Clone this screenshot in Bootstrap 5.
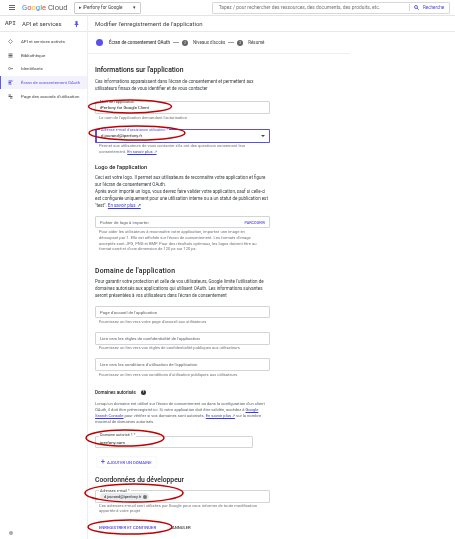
<!DOCTYPE html>
<html lang="fr">
<head>
  <meta charset="UTF-8" />
  <meta name="viewport" content="width=device-width, initial-scale=1.0" />
  <title>Google Cloud - API et services</title>
  <link href="https://cdn.jsdelivr.net/npm/bootstrap@5.3.0/dist/css/bootstrap.min.css" rel="stylesheet" />
  <style>
    html, body { height: 539px; overflow: hidden; }
    body { font-family: Roboto, "Liberation Sans", sans-serif; font-size: 4.3px; line-height: 7px; color: #3c4043; position: relative; background: #fff; }
    a { color: #3b3be0; }
    .top-bar, .side-col, .main-col { will-change: transform; }
    .top-bar { height: 16px; border-bottom: 1px solid #e4e4e4; padding: 1px 5px 1px 9px; }
    .burger { width: 6px; height: 5px; border-top: 1px solid #666; border-bottom: 1px solid #666; position: relative; margin-right: 7px; }
    .burger::after { content: ""; position: absolute; left: 0; right: 0; top: 1px; height: 1px; background: #666; }
    .g-logo { font-size: 7.6px; line-height: 12px; width: 52px; color: #5f6368; }
    .g-blue { color: #4285f4; }
    .g-red { color: #ea4335; }
    .g-yellow { color: #fbbc05; }
    .g-green { color: #34a853; }
    .project-btn { width: 67px; height: 12px; border: 1px solid #ccc; border-radius: 1px; font-size: 4.6px; padding: 0 4px; color: #3c4043; }
    .search-box { width: 239px; height: 12px; margin-left: 71px; border: 1px solid #d8d8d8; border-radius: 1px; color: #70757a; }
    .search-text { padding-left: 6px; font-size: 4.9px; white-space: nowrap; }
    .search-go { width: 40px; border-left: 1px solid #d8d8d8; color: #4a3fe0; font-size: 4.5px; padding-left: 4px; }
    .side-col { width: 88px; height: 523px; border-right: 1px solid #eee; }
    .side-head { height: 16px; padding-left: 5px; border-bottom: 1px solid #e8e8e8; font-size: 6px; color: #444; }
    .api-mark { width: 17px; font-family: "Liberation Mono", monospace; font-size: 6px; font-weight: 700; color: #666; }
    .side-list { padding-top: 3px; }
    .side-item { height: 13.6px; padding-left: 8px; font-size: 4.4px; color: #444; white-space: nowrap; }
    .side-item svg { margin-right: 8px; }
    .side-on { background: #f2f2fd; border-left: 1px solid #5b5bf0; padding-left: 7px; color: #5a50e0; }
    .collapse-mark { position: absolute; left: 9px; bottom: 4px; width: 4px; height: 4px; border-radius: 50%; background: #aaa; }
    .main-col { width: 367px; }
    .page-title { height: 16px; padding-left: 7px; border-bottom: 1px solid #e8e8e8; font-size: 6px; color: #444; }
    .step-row { width: 262px; height: 22px; padding-left: 8px; border-bottom: 1px solid #eee; color: #444; font-size: 4.5px; white-space: nowrap; }
    .step-dot { width: 7px; height: 7px; border-radius: 50%; background: #5b50e8; margin-right: 6px; }
    .step-num { width: 6px; height: 6px; border-radius: 50%; background: #5f6368; margin-right: 5px; color: #fff; font-size: 3px; line-height: 6px; text-align: center; }
    .step-line { width: 6px; height: 1px; background: #9aa0a6; margin: 0 3px; }
    .form-area { width: 175px; margin-left: 7px; }
    .sec-title { font-size: 6.8px; font-weight: 500; line-height: 8px; color: #202124; white-space: nowrap; }
    .title-wide { letter-spacing: .25px; }
    .sub-title { font-size: 5.7px; font-weight: 500; line-height: 8px; color: #202124; white-space: nowrap; }
    .tiny-title { font-size: 4.6px; font-weight: 500; line-height: 7px; color: #202124; }
    .txt { line-height: 7px; font-size: 4.5px; color: #3c4043; margin: 0; white-space: nowrap; }
    .txt-sm { line-height: 5.7px; font-size: 4.1px; color: #70757a; margin: 0; padding-left: 4px; white-space: nowrap; }
    .txt-dark { padding-left: 0; color: #5f6368; }
    .fld { height: 12.5px; border: 1px solid #d4d4d4; border-radius: 1px; padding-left: 4px; position: relative; color: #5f6368; }
    .fld-on { border: 1px solid #5b50e8; height: 14px; border-left-width: 2px; }
    .fld-val { color: #202124; line-height: 6px; padding-top: 3px; }
    .fld-lbl { position: absolute; left: 3px; top: -3px; background: #fff; padding: 0 1px; font-size: 3.8px; line-height: 5px; color: #3c4043; white-space: nowrap; }
    .fld-lbl-on { color: #5b50e8; }
    .lbl-high { top: -5px; }
    .caret-down { position: absolute; right: 4px; top: 5px; border-left: 2px solid transparent; border-right: 2px solid transparent; border-top: 2px solid #444; }
    .pick-btn { color: #5b50e8; font-size: 3.8px; font-weight: 500; margin-right: 4px; }
    .domain-fld { width: 158px; height: 11.5px; }
    .add-btn { width: 59px; height: 10px; margin-left: 2px; color: #5b50e8; font-size: 4.2px; font-weight: 500; box-shadow: 0 0 1px #bbb; border-radius: 1px; padding-left: 4px; white-space: nowrap; }
    .add-plus { font-size: 7px; margin-right: 2px; }
    .mail-fld { height: 13px; }
    .mail-chip { display: inline-flex; align-items: center; background: #e8eaed; border-radius: 4px; height: 7px; padding: 0 2px 0 4px; margin-top: 2.5px; color: #202124; font-size: 3.9px; white-space: nowrap; }
    .chip-x { width: 4px; height: 4px; border-radius: 50%; background: #777; margin-left: 2px; }
    .help-dot { width: 5px; height: 5px; border-radius: 50%; background: #333; color: #fff; font-size: 3.6px; line-height: 5px; text-align: center; margin-left: 5px; }
    .save-btn { color: #4a3fe0; font-size: 4.2px; font-weight: 500; padding-left: 4px; width: 77px; white-space: nowrap; }
    .cancel-btn { color: #3c4043; font-size: 4.2px; font-weight: 500; }
    .red-marks { position: absolute; left: 0; top: 0; pointer-events: none; }
    /* vertical rhythm taken from the reference */
    .sp-1 { margin-top: .8px; }
    .sp-2 { margin-top: 1.5px; }
    .sp-3 { margin-top: 2.5px; }
    .sp-4 { margin-top: 3.5px; }
    .sp-5 { margin-top: 5.5px; }
    .sp-6 { margin-top: 6px; }
    .sp-7 { margin-top: 7.3px; }
    .sp-8 { margin-top: 8.5px; }
    .sp-9 { margin-top: 9.5px; }
    .sp-11 { margin-top: 11.5px; }
    .sp-12 { margin-top: 12px; }
    .sp-15 { margin-top: 15px; }
  </style>
</head>
<body>
  <div class="top-bar d-flex align-items-center">
    <div class="burger"></div>
    <div class="g-logo"><span class="g-blue">G</span><span class="g-red">o</span><span class="g-yellow">o</span><span class="g-blue">g</span><span class="g-green">l</span><span class="g-red">e</span> Cloud</div>
    <div class="project-btn d-flex align-items-center justify-content-between">
      <span>&#9656; iPerfony for Google</span>
      <span>&#9662;</span>
    </div>
    <div class="search-box d-flex align-items-center">
      <div class="search-text flex-grow-1">Tapez / pour rechercher des ressources, des documents, des produits, etc.</div>
      <div class="search-go d-flex align-items-center gap-1 flex-shrink-0">
        <svg width="5" height="5" viewBox="0 0 10 10" fill="none" stroke="#4a3fe0" stroke-width="1.6"><circle cx="4" cy="4" r="3"/><path d="M6.2 6.2 9.5 9.5"/></svg>
        Recherche
      </div>
    </div>
  </div>

  <div class="d-flex">
    <div class="side-col flex-shrink-0">
      <div class="side-head d-flex align-items-center">
        <span class="api-mark">API</span>
        <span class="flex-grow-1">API et services</span>
        <svg class="me-2" width="5" height="6" viewBox="0 0 10 12" fill="#5b50e8"><path d="M3 0h4v5l2 2v1H6v4H4V8H1V7l2-2z"/></svg>
      </div>
      <div class="side-list">
        <div class="side-item d-flex align-items-center">
          <svg width="5" height="5" viewBox="0 0 10 10" fill="none" stroke="#666" stroke-width="1.3"><path d="M5 1 9 5 5 9 1 5z"/></svg>API et services activés
        </div>
        <div class="side-item d-flex align-items-center">
          <svg width="5" height="5" viewBox="0 0 10 10" fill="#666"><path d="M1 1h8v2H1zM1 4h8v2H1zM1 7h8v2H1z"/></svg>Bibliothèque
        </div>
        <div class="side-item d-flex align-items-center">
          <svg width="5" height="5" viewBox="0 0 10 10" fill="none" stroke="#666" stroke-width="1.3"><circle cx="3" cy="5" r="2"/><path d="M5 5h5M8 5v2"/></svg>Identifiants
        </div>
        <div class="side-item side-on d-flex align-items-center">
          <svg width="5" height="5" viewBox="0 0 10 10" fill="#5a50e0"><path d="M1 1h8v2H1zM1 4h5v2H1zM1 7h6v2H1z"/></svg>Écran de consentement OAuth
        </div>
        <div class="side-item d-flex align-items-center">
          <svg width="5" height="5" viewBox="0 0 10 10" fill="#666"><path d="M1 1h5v2H1zM1 4h8v2H1zM4 7h5v2H4z"/></svg>Page des accords d'utilisation
        </div>
      </div>
      <div class="collapse-mark"></div>
    </div>

    <div class="main-col">
      <div class="page-title d-flex align-items-center">Modifier l'enregistrement de l'application</div>
      <div class="step-row d-flex align-items-center">
        <div class="step-dot"></div><strong class="fw-medium">Écran de consentement OAuth</strong>
        <div class="step-line"></div>
        <div class="step-num">2</div>Niveaux d'accès
        <div class="step-line"></div>
        <div class="step-num">3</div>Résumé
      </div>

      <div class="form-area">
        <div class="sec-title sp-12">Informations sur l'application</div>
        <p class="txt sp-4">Ces informations apparaissent dans l'écran de consentement et permettent aux<br />utilisateurs finaux de vous identifier et de vous contacter</p>
        <div class="fld sp-9">
          <span class="fld-lbl">Nom de l'application *</span>
          <div class="fld-val">iPerfony for Google Client</div>
        </div>
        <p class="txt-sm sp-2">Le nom de l'application demandant l'autorisation</p>
        <div class="fld fld-on sp-8">
          <span class="fld-lbl fld-lbl-on">Adresse e-mail d'assistance utilisateur *</span>
          <div class="fld-val">d.jourand@iperfony.fr</div>
          <span class="caret-down"></span>
        </div>
        <p class="txt-sm">Permet aux utilisateurs de vous contacter s'ils ont des questions concernant leur<br />consentement. <a href="#">En savoir plus ↗</a></p>

        <div class="sub-title sp-8">Logo de l'application</div>
        <p class="txt sp-3">Ceci est votre logo. Il permet aux utilisateurs de reconnaître votre application et figure<br />sur l'écran de consentement OAuth.<br />Après avoir importé un logo, vous devrez faire valider votre application, sauf si celle-ci<br />est configurée uniquement pour une utilisation interne ou a un statut de publication est<br />"test". <a href="#">En savoir plus ↗</a></p>
        <div class="fld sp-7 d-flex align-items-center justify-content-between">
          <span>Fichier de logo à importer</span>
          <span class="pick-btn">PARCOURIR</span>
        </div>
        <p class="txt-sm sp-1">Pour aider les utilisateurs à reconnaître votre application, importez une image en<br />découpant par 1. Elle est affichée sur l'écran de consentement. Les formats d'image<br />acceptés sont JPG, PNG et BMP. Pour des résultats optimaux, les logos doivent être au<br />format carré et d'une dimension de 120 px sur 120 px.</p>

        <div class="sec-title title-wide sp-15">Domaine de l'application</div>
        <p class="txt sp-3">Pour garantir votre protection et celle de vos utilisateurs, Google limite l'utilisation de<br />domaines autorisés aux applications qui utilisent OAuth. Les informations suivantes<br />seront présentées à vos utilisateurs dans l'écran de consentement</p>
        <div class="fld sp-7 d-flex align-items-center">Page d'accueil de l'application</div>
        <p class="txt-sm sp-1">Fournissez un lien vers votre page d'accueil aux utilisateurs</p>
        <div class="fld sp-7 d-flex align-items-center">Lien vers les règles de confidentialité de l'application</div>
        <p class="txt-sm sp-1">Fournissez un lien vers vos règles de confidentialité publiques aux utilisateurs</p>
        <div class="fld sp-7 d-flex align-items-center">Lien vers les conditions d'utilisation de l'application</div>
        <p class="txt-sm sp-1">Fournissez un lien vers vos conditions d'utilisation publiques aux utilisateurs</p>

        <div class="tiny-title d-flex align-items-center sp-11">Domaines autorisés <span class="help-dot">?</span></div>
        <p class="txt-sm txt-dark sp-5">Lorsqu'un domaine est utilisé sur l'écran de consentement ou dans la configuration d'un client<br />OAuth, il doit être pré-enregistré ici. Si votre application doit être validée, accédez à <a href="#">Google</a><br /><a href="#">Search Console</a> pour vérifier si vos domaines sont autorisés. <a href="#">En savoir plus ↗</a> sur la nombre<br />maximal de domaines autorisés.</p>
        <div class="fld domain-fld sp-12">
          <span class="fld-lbl lbl-high">Domaine autorisé 1 *</span>
          <div class="fld-val">iperfony.com</div>
        </div>
        <div class="add-btn sp-9 d-flex align-items-center"><span class="add-plus">+</span>AJOUTER UN DOMAINE</div>

        <div class="sec-title sp-8">Coordonnées du développeur</div>
        <div class="fld mail-fld sp-6">
          <span class="fld-lbl">Adresses e-mail *</span>
          <span class="mail-chip">d.jourand@iperfony.fr<span class="chip-x"></span></span>
        </div>
        <p class="txt-sm">Ces adresses e-mail sont utilisées par Google pour vous informer de toute modification<br />apportée à votre projet</p>
        <div class="d-flex sp-9">
          <span class="save-btn">ENREGISTRER ET CONTINUER</span>
          <span class="cancel-btn">ANNULER</span>
        </div>
      </div>
    </div>
  </div>

  <svg class="red-marks" width="455" height="539" viewBox="0 0 455 539" fill="none" stroke="#c00000" stroke-width="1.5">
    <ellipse cx="130" cy="106.5" rx="41.5" ry="6.5"/>
    <ellipse cx="137" cy="133" rx="48" ry="7"/>
    <ellipse cx="125" cy="438" rx="39" ry="8"/>
    <ellipse cx="134" cy="493" rx="49" ry="9"/>
    <ellipse cx="130" cy="527" rx="42" ry="7"/>
  </svg>
  <script src="https://cdn.jsdelivr.net/npm/bootstrap@5.3.0/dist/js/bootstrap.bundle.min.js"></script>
</body>
</html>
